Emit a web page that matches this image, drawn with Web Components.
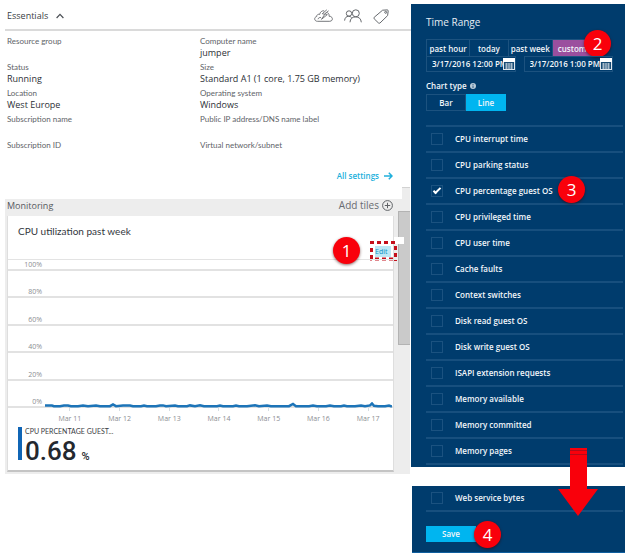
<!DOCTYPE html>
<html lang="en">
<head>
<meta charset="utf-8">
<title>Virtual machine diagnostics</title>
<style>
body { margin: 0; background: #fff; font-family: "Open Sans", "Noto Sans", sans-serif; font-size: 9px; color: #3a3e44; }
</style>
</head>
<body>
<vm-page></vm-page>
<script>
const base = `<style>
*, *::before, *::after { box-sizing: border-box; }
:host { display: block; }
button, input { font: inherit; color: inherit; margin: 0; padding: 0; border: 0; background: none; border-radius: 0; }
button, a { cursor: pointer; }
svg { display: block; }
</style>`;

function define(name, render) {
  customElements.define(name, class extends HTMLElement {
    constructor() { super(); this.attachShadow({ mode: 'open' }); }
    connectedCallback() {
      if (!this.shadowRoot.firstChild) this.shadowRoot.innerHTML = base + render(this);
    }
  });
}

define('step-badge', () => `<style>
:host { display: flex; align-items: center; justify-content: center; width: 27px; height: 27px;
  border-radius: 50%; background: #f9000b; color: #fff; font-size: 17px; font-weight: 400; line-height: 27px;
  box-shadow: 0 1px 3px rgba(60,0,0,.6); }
</style><slot></slot>`);

define('info-field', el => `<style>
:host { height: 26px; padding-top: 4px; }
dl, dd, dt { margin: 0; }
dt { font: 8px/12px Lato, sans-serif; color: #606368; }
dd { line-height: 12px; color: #2c3036; white-space: nowrap; }
</style><dl><dt>${el.getAttribute('label')}</dt><dd><slot></slot></dd></dl>`);

define('essentials-panel', () => `<style>
:host { margin-left: 5px; }
header { display: flex; align-items: center; height: 31px; padding: 3px 22px 0 2px; border-bottom: 2px solid #dadada; }
h2 { margin: 0; font-size: 9px; font-weight: 400; line-height: 14px; }
.toggle { margin-left: 8px; }
.tools { display: flex; align-items: center; gap: 11px; margin-left: auto; }
.fields { display: grid; grid-template-columns: 193fr 211fr; padding-left: 2px; }
.more { display: flex; justify-content: flex-end; padding: 9px 18px 0 0; height: 38px; }
a { display: flex; align-items: center; gap: 5px; height: 12px; font-size: 8px; font-weight: 600; line-height: 12px; color: #21b0dc; text-decoration: none; }
</style>
<header>
  <h2>Essentials</h2>
  <button class="toggle" aria-label="Collapse essentials"><svg width="8" height="6" fill="none" stroke="#4a4e54" stroke-width="1.2"><path d="M.6 5 4 1.4 7.4 5"/></svg></button>
  <div class="tools">
    <button aria-label="Quick start"><svg width="19" height="14" viewBox="0 0 19 14" fill="none" stroke="#66696d" stroke-width=".9"><path d="M7 12.3H3.4C.2 12.3-.3 8.2 2.7 7.5 2.6 5.6 4.5 4.8 5.6 5.5 6 3 8 1.500 10.200 1.800M13.300 3.600C15.100 4.400 15.300 6 15 7.200 19.200 7 19.500 12.300 15.800 12.300H7M4 10.200C4.400 8.700 5.800 8.200 7 8.600"/><path d="M12.800.8 8.300 4.700 10.800 5.300 7.500 10.300 13.300 5.600 10.800 4.800 14.600 1.800"/></svg></button>
    <button aria-label="Users"><svg width="18" height="14" viewBox="0 0 18 14" fill="none" stroke="#66696d" stroke-width="1"><circle cx="5" cy="4.500" r="2.700"/><circle cx="11.800" cy="4.300" r="3.500"/><path d="M.6 11.600C.8 8.800 2.300 7.300 4.600 7.300 5.900 7.300 6.900 7.700 7.600 8.600M6 13.300C6.200 9.700 8.200 7.900 11.600 7.900 15 7.900 17 9.700 17.300 13.300"/></svg></button>
    <button aria-label="Tags"><svg width="16" height="15" viewBox="0 0 16 15" fill="none" stroke="#66696d" stroke-width="1"><path d="M9.600 1.200 14.300.9Q15.200 1 15.200 2L14.600 6.600 7 14Q6.200 14.600 5.400 13.900L1.200 9.800Q.5 9 1.200 8.300Z"/><circle cx="12.700" cy="3.300" r="1"/></svg></button>
  </div>
</header>
<div class="fields">
  <info-field label="Resource group"></info-field><info-field label="Computer name">jumper</info-field>
  <info-field label="Status">Running</info-field><info-field label="Size">Standard A1 (1 core, 1.75 GB memory)</info-field>
  <info-field label="Location">West Europe</info-field><info-field label="Operating system">Windows</info-field>
  <info-field label="Subscription name"></info-field><info-field label="Public IP address/DNS name label"></info-field>
  <info-field label="Subscription ID"></info-field><info-field label="Virtual network/subnet"></info-field>
</div>
<div class="more"><a href="#settings">All settings <svg width="9" height="8" fill="none" stroke="#21b0dc" stroke-width="1.500"><path d="M0 4H8M4.800.8 8 4 4.800 7.200"/></svg></a></div>`);

define('usage-chart', () => `<style>
.plot { position: relative; display: grid; grid-template-rows: 11px repeat(5, 1fr); height: 149px; border-top: 1px solid #e3e3e3; }
.row { display: flex; align-items: flex-end; border-bottom: 2px solid #e2e2e2; }
.row span { width: 34px; text-align: right; font-size: 7px; line-height: 8px; color: #8b8e92; }
.line { position: absolute; left: 37px; right: 1px; bottom: 0; }
.line svg { width: 100%; height: 6px; }
.days { display: grid; grid-template-columns: repeat(7, 1fr); margin-left: 37px; }
.days span { font-size: 7px; line-height: 12px; text-align: center; color: #8b8e92; }
.days span::before { content: ""; display: block; width: 1px; height: 3px; margin: 0 auto 2px; background: #d5dde2; }
</style>
<div class="plot">
${['100%', '80%', '60%', '40%', '20%', '0%'].map(t => `<div class="row"><span>${t}</span></div>`).join('')}
<div class="line"><svg viewBox="0 0 347 6" preserveAspectRatio="none"><path fill="none" stroke="#1c74b8" stroke-width="2.500" d="M0 3.500H7L9 4.200H15L19 3.500H23L26 4.200H33L38 3.400 43 4.200 51 3.500 55 4.200H65L68 2.500 71 4.200 78 3.500H85L88 4.200H96L99 3.500 102 4.200H111L115 3.400H118L121 4.200 130 3.500 133 4.200H142L145 3.400 150 4.200 155 3.300 159 4.200H172L175 3.500 178 4.200H188L191 3.500 194 4.200H202L210 3.200 214 4.200 222 3.500 226 4.200H244L248 2 251 4.200H264L268 3.600 272 4.200H281L285 3.500 289 4.200H296L299 3.600 302 4.200H310L316 3.500 320 4.200 325 3.400 327 1.500 329 3.800 333 4.200H340L344 3.500 347 4.600"/></svg></div>
</div>
<div class="days">${[11, 12, 13, 14, 15, 16, 17].map(d => `<span>Mar ${d}</span>`).join('')}</div>`);

define('metric-value', () => `<style>
:host { border-left: 4px solid #1065b5; padding-left: 3px; color: #24282f; }
.name { height: 9px; font: 7px/8px Lato, sans-serif; color: #3a3e44; }
.value { display: flex; align-items: baseline; gap: 5px; height: 24px; font: 500 26px/30px Roboto, sans-serif; }
.unit { font-size: 11px; }
</style>
<div class="name"><slot name="name"></slot></div>
<div class="value"><slot></slot><span class="unit">%</span></div>`);

define('monitoring-panel', () => `<style>
:host { display: flex; position: relative; margin: 0 1px 0 5px; background: #ededed; }
:host::before { content: ""; position: absolute; right: 0; top: -12px; width: 8px; height: 12px; background: #ededed; border-top: 1px solid #d2d2d2; }
.main { flex: 1; min-width: 0; padding: 0 0 2px 2px; }
header { display: flex; align-items: center; justify-content: space-between; height: 17px; padding: 0 1px 4px 0; }
h2, h3 { margin: 0; font-weight: 400; }
h2 { font-size: 9px; line-height: 13px; color: #55585d; }
.add { display: flex; align-items: center; gap: 3px; font-size: 10px; line-height: 13px; color: #686b70; }
.card { background: #fff; border: 1px solid #dedede; border-top: 0; border-bottom: 2px solid #c4c4c4; padding-bottom: 10px; position: relative; }
h3 { height: 30px; padding-left: 10px; font: 10px/30px Lato, sans-serif; color: #33373d; }
.actions { display: flex; justify-content: flex-end; height: 13px; padding-right: 2px; }
.target { position: relative; width: 16px; height: 11px; }
.edit { position: relative; display: block; width: 100%; height: 11px; background: #bce8f6; font-size: 7px; line-height: 11px; color: #0f93c4; text-align: left; }
.target::before { content: ""; position: absolute; left: 19px; top: -9px; width: 10px; height: 7px; background: #fff; }
.target svg { position: absolute; left: -5px; top: -5px; pointer-events: none; }
step-badge { position: absolute; right: 33px; top: 21px; }
metric-value { margin: 2px 0 0 10px; }
.bar { width: 16px; padding: 12px 0 0 4px; }
.thumb { height: 134px; background: #cacaca; border: 1px solid #b3b3b3; border-right: 0; }
</style>
<div class="main">
  <header><h2>Monitoring</h2><button class="add">Add tiles <svg width="11" height="11" fill="none" stroke="#5f6266"><circle cx="5.500" cy="5.500" r="4.900"/><path d="M2.800 5.500H8.200M5.500 2.800V8.200"/></svg></button></header>
  <section class="card">
    <h3>CPU utilization past week</h3>
    <div class="actions"><div class="target"><button class="edit">Edit</button><svg width="27" height="20" fill="none" stroke="#c4101c" stroke-width="3" stroke-dasharray="4 3"><path d="M0 1.500H27M25.500 5V20M23 18H0M1.500 7V20"/></svg></div></div>
    <usage-chart></usage-chart>
    <metric-value><span slot="name">CPU PERCENTAGE GUEST...</span>0.68</metric-value>
    <step-badge>1</step-badge>
  </section>
</div>
<div class="bar"><div class="thumb"></div></div>`);

define('metric-option', el => `<style>
:host { border-bottom: 2px solid #174f7e; position: relative; }
label { display: flex; align-items: center; height: 24px; padding-left: 5px; gap: 12px; font-size: 8px; font-weight: 600; line-height: 12px; }
input { appearance: none; width: 12px; height: 12px; border: 1px solid #1b5280; display: grid; place-items: center; flex: none; }
input:checked::before { content: ""; width: 8px; height: 4px; border: solid #fff; border-width: 0 0 2px 2px; transform: translateY(-1px) rotate(-45deg); }
::slotted(step-badge) { position: absolute; left: 132px; top: -3px; }
</style><label><input type="checkbox"${el.hasAttribute('checked') ? ' checked' : ''}><span>${el.getAttribute('label')}</span></label><slot></slot>`);

define('date-field', el => `<style>
:host { position: relative; border: 1px solid #1c527f; height: 16px; }
input { display: block; width: 100%; height: 14px; padding-left: 5px; font: 600 8px/14px "Open Sans", sans-serif; color: #f4f8fb; outline: 0; }
button { position: absolute; right: 0; top: 1px; background: #003c6d; }
</style>
<input type="text" aria-label="${el.getAttribute('label')}" value="${el.getAttribute('value')}">
<button aria-label="Pick ${el.getAttribute('label')}"><svg width="12" height="12"><rect x=".5" y=".5" width="11" height="11" fill="#174b74" stroke="#dfe7ee"/><path fill="#fff" d="M0 0H12V4H0Z"/><path stroke="#a9bccb" stroke-width="1" fill="none" d="M2 6H10M2 8H10M2 10H10M3.500 5V11M6 5V11M8.500 5V11"/></svg></button>`);

define('chart-settings', () => `<style>
:host { padding: 11px 2px 2px 15px; background: #003c6d; color: #f2f6fa; position: relative; font-size: 8px; font-weight: 600; }
h2 { margin: 0 0 9px; font-size: 10px; font-weight: 400; line-height: 15px; color: #e6edf4; }
.ranges { display: grid; grid-template-columns: 43fr 39fr 45fr 48fr; margin-right: 23px; position: relative; height: 17px; border: 1px solid #1c527f; border-bottom: 0; }
.ranges button { white-space: nowrap; line-height: 15px; }
.ranges button + button { border-left: 1px solid #1c527f; }
.ranges .on { background: #9b4f9e; padding-left: 5px; text-align: left; }
.ranges step-badge { position: absolute; right: -12px; top: -10px; }
.dates { display: grid; grid-template-columns: 1fr 1fr; gap: 8px; margin-right: 10px; }
.type { display: flex; align-items: center; gap: 3px; margin-top: 8px; height: 12px; line-height: 12px; }
.kinds { display: grid; grid-template-columns: 40px 40px; margin-top: 2px; height: 17px; margin-bottom: 14px; }
.kinds button { border: 1px solid #1c527f; line-height: 15px; }
.kinds .on { background: #00b5f0; border-color: #00b5f0; }
.list { border-top: 2px solid #174f7e; }
</style>
<h2>Time Range</h2>
<div class="ranges"><button>past hour</button><button>today</button><button>past week</button><button class="on">custom</button><step-badge>2</step-badge></div>
<div class="dates"><date-field label="start date" value="3/17/2016 12:00 PM"></date-field><date-field label="end date" value="3/17/2016 1:00 PM"></date-field></div>
<div class="type">Chart type <svg width="6" height="6"><circle cx="3" cy="3" r="3" fill="#b9cbd9"/><path d="M3 1V2M3 2.500V5" stroke="#315f86"/></svg></div>
<div class="kinds"><button>Bar</button><button class="on">Line</button></div>
<div class="list">
<metric-option label="CPU interrupt time"></metric-option>
<metric-option label="CPU parking status"></metric-option>
<metric-option label="CPU percentage guest OS" checked><step-badge>3</step-badge></metric-option>
<metric-option label="CPU privileged time"></metric-option>
<metric-option label="CPU user time"></metric-option>
<metric-option label="Cache faults"></metric-option>
<metric-option label="Context switches"></metric-option>
<metric-option label="Disk read guest OS"></metric-option>
<metric-option label="Disk write guest OS"></metric-option>
<metric-option label="ISAPI extension requests"></metric-option>
<metric-option label="Memory available"></metric-option>
<metric-option label="Memory committed"></metric-option>
<metric-option label="Memory pages"></metric-option>
</div>`);

define('save-panel', () => `<style>
:host { position: relative; margin: 19px 0 0 1px; padding: 0 2px 10px 14px; background: #003c6d; color: #f2f6fa; border-bottom: 1px solid #0f5f9f; }
.save { display: block; width: 50px; height: 16px; margin-top: 14px; background: #00b5f0; font-size: 8px; font-weight: 600; line-height: 16px; }
.arrow { position: absolute; right: 27px; top: -38px; }
step-badge { position: absolute; left: 62px; top: 35px; }
</style>
<metric-option label="Web service bytes"></metric-option>
<button class="save">Save</button>
<step-badge>4</step-badge>
<svg class="arrow" width="40" height="68"><path fill="#f9000b" d="M12 0H29V41H40L20 68 0 41H12Z"/><path stroke="#b30a18" stroke-width="1" d="M12 2.500H29M12 6.500H29"/></svg>`);

define('vm-page', () => `<style>
:host { display: grid; grid-template-columns: minmax(0, 411fr) minmax(0, 214fr); align-items: start; padding-right: 3px; }
.side { padding-top: 4px; }
</style>
<main><essentials-panel></essentials-panel><monitoring-panel></monitoring-panel></main>
<aside class="side"><chart-settings></chart-settings><save-panel></save-panel></aside>`);
</script>
</body>
</html>
